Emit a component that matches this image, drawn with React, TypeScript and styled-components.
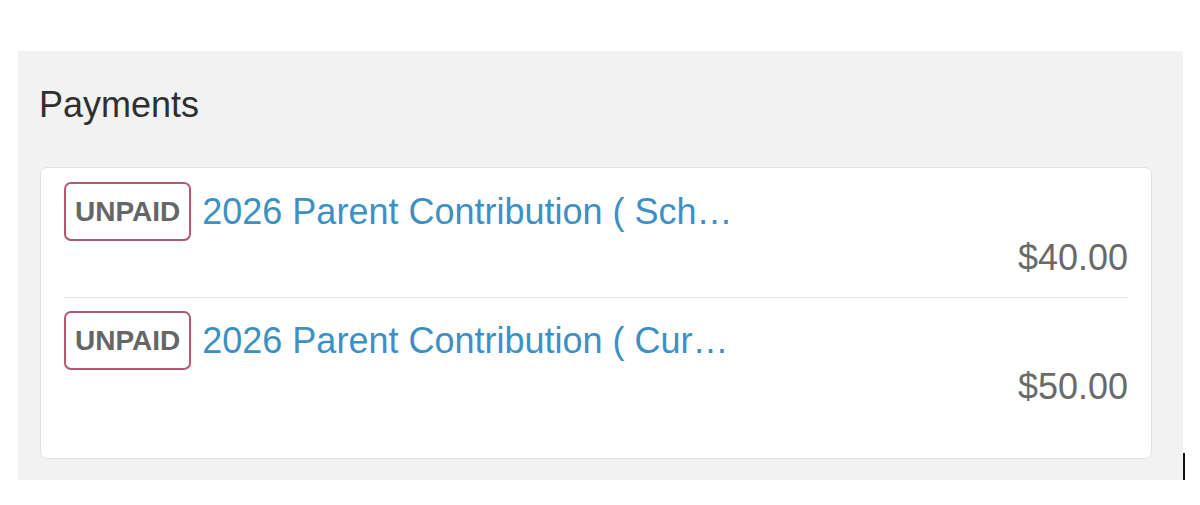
import styled, { createGlobalStyle } from 'styled-components';

const GlobalStyle = createGlobalStyle`
  html, body {
    margin: 0;
    padding: 0;
    background: #ffffff;
    font-family: 'Liberation Sans', Arial, sans-serif;
  }
`;

interface Payment {
  id: number;
  status: string;
  title: string;
  amount: string;
}

const payments: Payment[] = [
  { id: 1, status: 'UNPAID', title: '2026 Parent Contribution ( Sch…', amount: '$40.00' },
  { id: 2, status: 'UNPAID', title: '2026 Parent Contribution ( Cur…', amount: '$50.00' },
];

const App = () => {
  return (
    <>
      <GlobalStyle />
      <Page>
        <Panel>
          <Title>Payments</Title>
          <Card>
            {payments.map(payment => (
              <Row key={payment.id}>
                <RowHead>
                  <Badge>{payment.status}</Badge>
                  <TitleLink href='#'>{payment.title}</TitleLink>
                </RowHead>
                <Amount>{payment.amount}</Amount>
              </Row>
            ))}
          </Card>
          <Caret />
        </Panel>
      </Page>
    </>
  );
};

const Page = styled.div`
  padding: 51px 17px 25px 18px;
`;

const Panel = styled.section`
  position: relative;
  box-sizing: border-box;
  height: 429px;
  background-color: #f2f2f2;
  padding: 34px 31px 21px 22px;
`;

const Title = styled.h2`
  margin: 0 0 42px -1px;
  font-size: 36px;
  line-height: 40px;
  font-weight: normal;
  color: #2f2f2f;
`;

const Card = styled.div`
  box-sizing: border-box;
  height: 292px;
  background-color: #ffffff;
  border: 1px solid #e2e2e2;
  border-radius: 7px;
  padding: 14px 22px 0 23px;
`;

const Row = styled.div`
  padding-bottom: 22px;

  & + & {
    border-top: 1px solid #e9e9e9;
    padding-top: 13px;
  }
`;

const RowHead = styled.div`
  display: flex;
  align-items: center;
  gap: 11px;
`;

const Badge = styled.span`
  box-sizing: border-box;
  height: 59px;
  display: inline-flex;
  align-items: center;
  padding: 0 9px;
  border: 2px solid #b05a70;
  border-radius: 7px;
  font-size: 28px;
  font-weight: bold;
  color: #666666;
`;

const TitleLink = styled.a`
  font-size: 36px;
  line-height: 40px;
  color: #3d90c4;
  text-decoration: none;
  white-space: nowrap;
`;

const Amount = styled.div`
  text-align: right;
  font-size: 36px;
  line-height: 34px;
  color: #6a6a6a;
  padding-right: 1px;
`;

const Caret = styled.span`
  position: absolute;
  right: -2px;
  bottom: 0;
  width: 2px;
  height: 27px;
  background-color: #111111;
`;

export default App;
